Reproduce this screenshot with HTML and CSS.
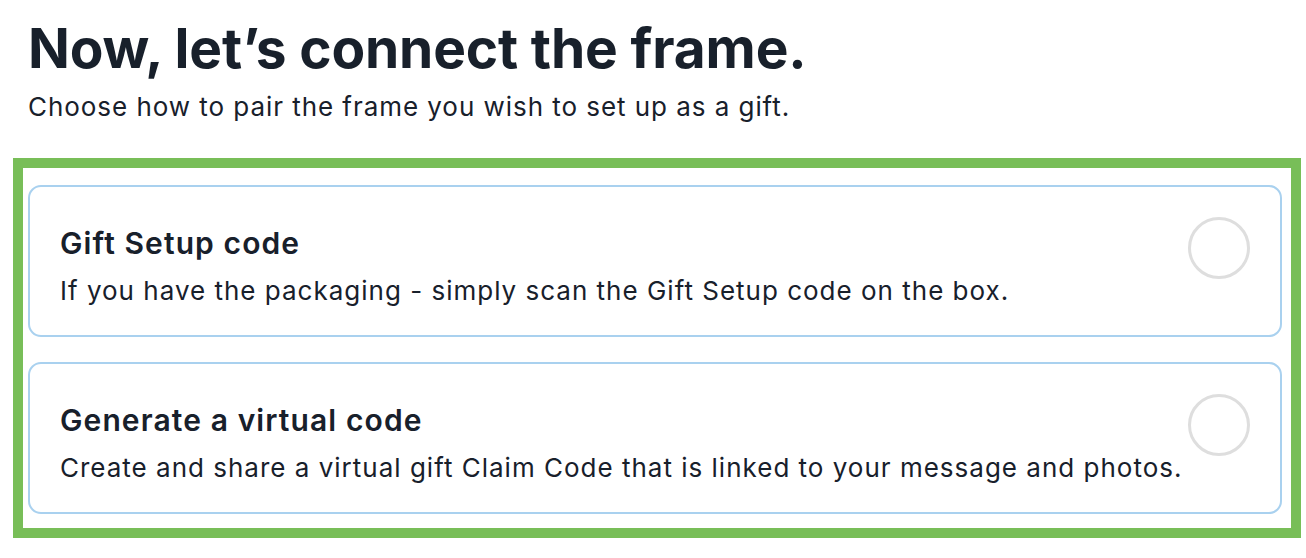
FILE: index.html
```html
<!DOCTYPE html>
<html>
<head>
<meta charset="utf-8">
<link rel="stylesheet" href="styles.css">
</head>
<body>
<div class="page">
  <h1 class="title">Now, let’s connect the frame.</h1>
  <p class="subtitle">Choose how to pair the frame you wish to set up as a gift.</p>
  <div class="highlight">
    <div class="option">
      <div class="option-text">
        <div class="option-title">Gift Setup code</div>
        <div class="option-desc">If you have the packaging - simply scan the Gift Setup code on the box.</div>
      </div>
      <div class="radio"></div>
    </div>
    <div class="option">
      <div class="option-text">
        <div class="option-title">Generate a virtual code</div>
        <div class="option-desc">Create and share a virtual gift Claim Code that is linked to your message and photos.</div>
      </div>
      <div class="radio"></div>
    </div>
  </div>
</div>
</body>
</html>
```

FILE: styles.css
```css
html, body {
  margin: 0;
  padding: 0;
  background: #ffffff;
}
body {
  font-family: Inter, "Noto Sans", "Liberation Sans", sans-serif;
  color: #18202b;
}
.page {
  padding: 0 5px 0 13px;
}
.title {
  margin: 0;
  padding: 15px 0 0 15px;
  font-size: 55px;
  font-weight: 700;
  line-height: 66px;
  letter-spacing: -0.15px;
}
.subtitle {
  margin: 0;
  padding: 8px 0 0 15px;
  font-size: 26px;
  line-height: 36px;
  font-weight: 400;
  letter-spacing: 0.95px;
}
.highlight {
  margin-top: 33px;
  border: 10px solid #78be58;
  padding: 17px 9px 14px 5px;
  display: flex;
  flex-direction: column;
  gap: 25px;
}
.option {
  border: 2px solid #a9d1ef;
  border-radius: 13px;
  height: 148px;
  display: flex;
  align-items: center;
  padding: 0 30px 0 30px;
}
.option-text {
  flex: 1;
  display: flex;
  flex-direction: column;
  gap: 14px;
  padding-top: 10px;
}
.option-title {
  font-size: 30px;
  font-weight: 600;
  line-height: 36px;
  letter-spacing: 1.1px;
}
.option-desc {
  font-size: 26px;
  line-height: 32px;
  letter-spacing: 1px;
}
.radio {
  width: 56px;
  height: 56px;
  border: 3px solid #dedede;
  border-radius: 50%;
  align-self: flex-start;
  margin-top: 30px;
}
```
